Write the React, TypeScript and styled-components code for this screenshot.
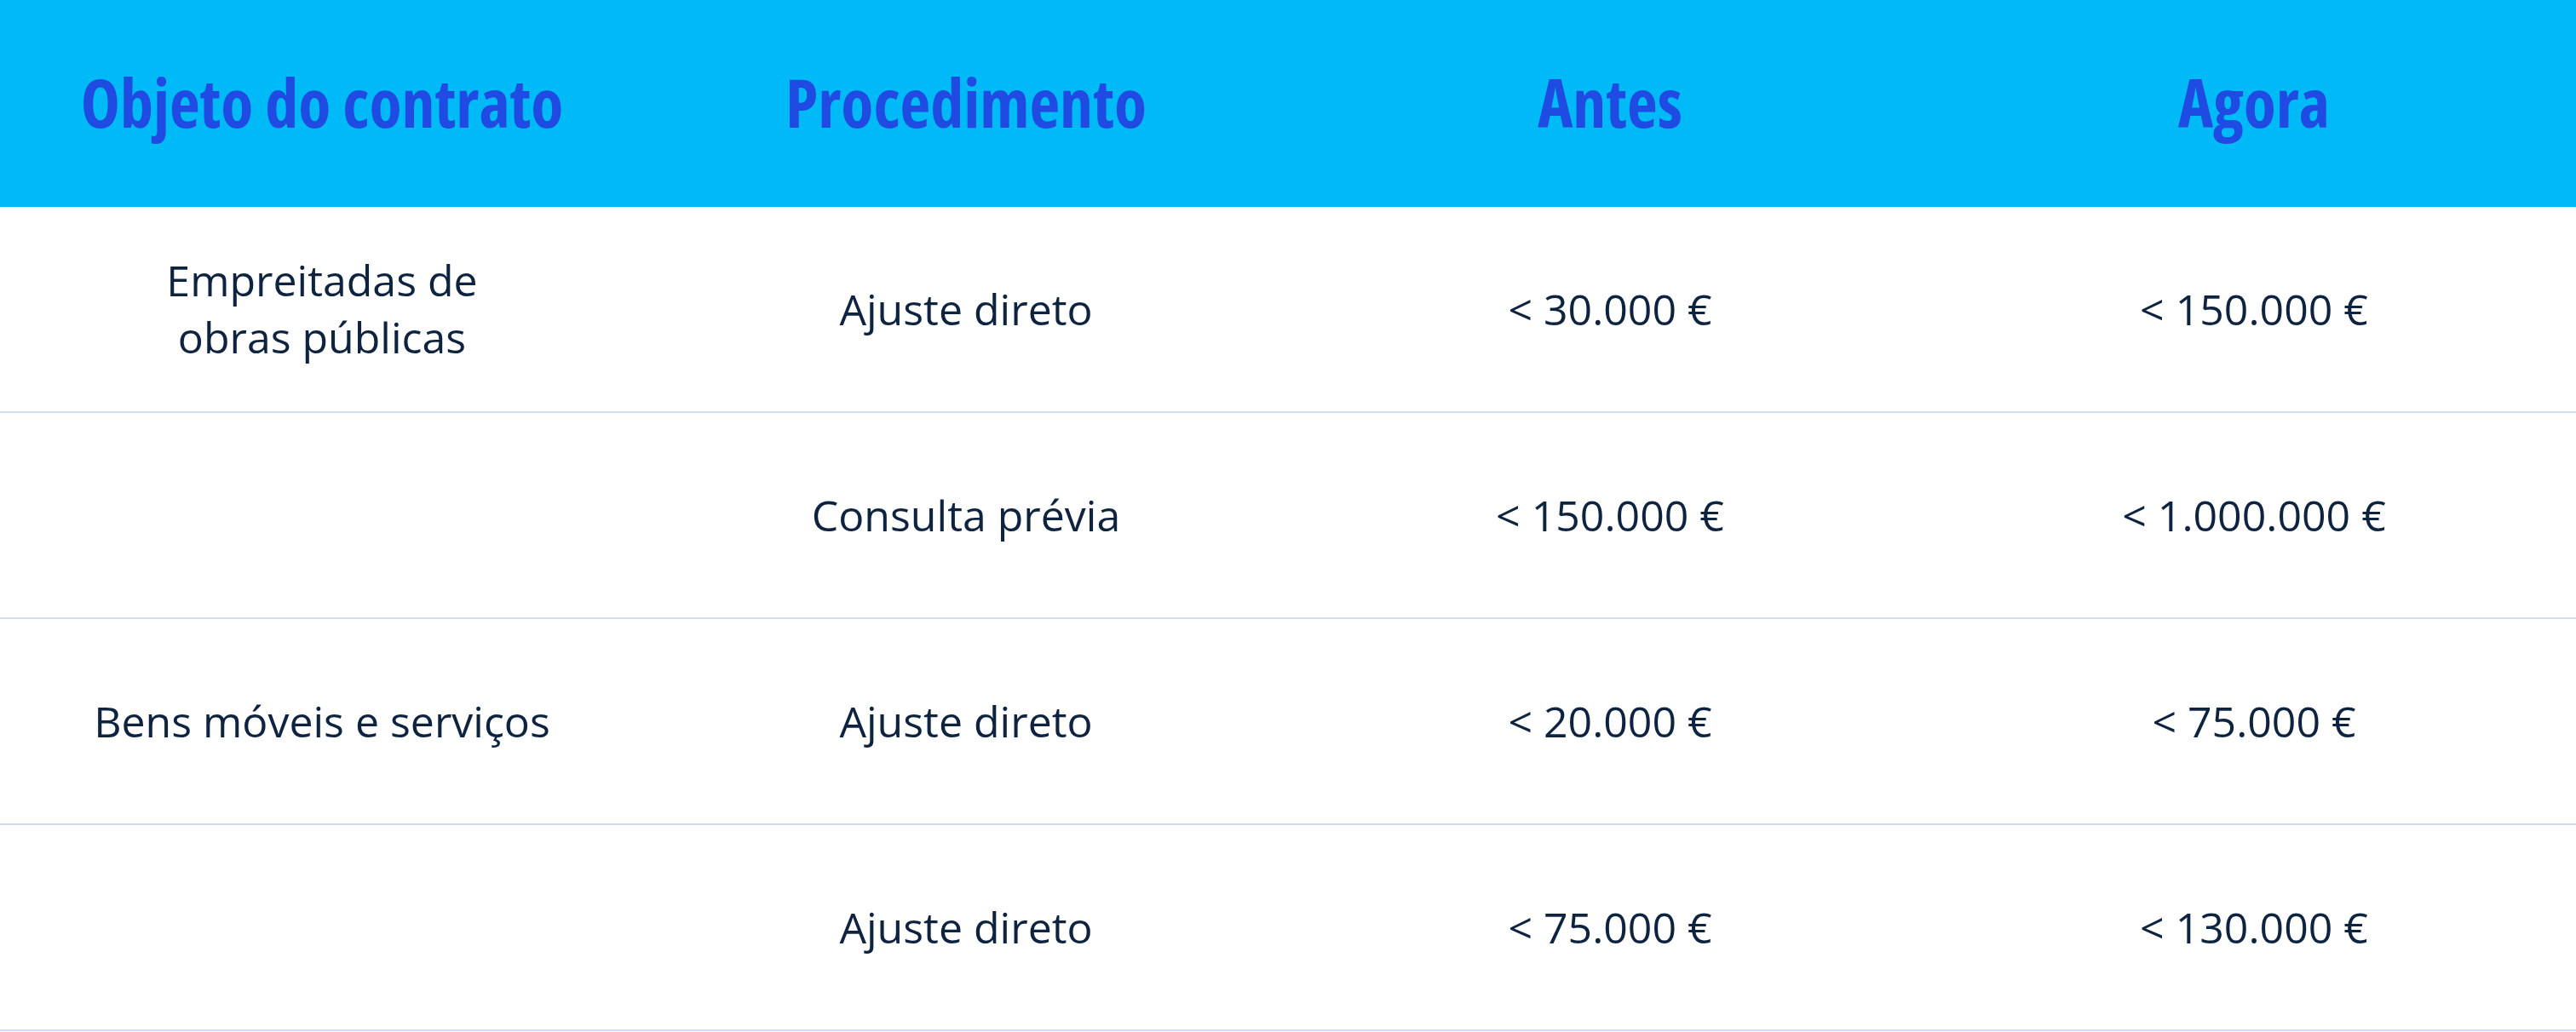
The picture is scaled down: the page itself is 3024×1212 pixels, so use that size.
import * as React from 'react';
import styled, { createGlobalStyle } from 'styled-components';

const GlobalStyles = createGlobalStyle`
  html, body {
    margin: 0;
    padding: 0;
    background: #ffffff;
    font-family: 'Open Sans', 'Liberation Sans', sans-serif;
  }

  *, *:before, *:after {
    box-sizing: border-box;
  }
`;

const Table = styled.div`
  width: 100%;
  display: flex;
  flex-direction: column;
`;

const HeaderRow = styled.div`
  display: grid;
  grid-template-columns: repeat(4, 1fr);
  height: 243px;
  background-color: #00baf7;
`;

const HeaderCell = styled.div`
  display: flex;
  align-items: center;
  justify-content: center;
  font-size: 78px;
  font-weight: 700;
  font-stretch: 75%;
  color: #1f4be2;
  padding-bottom: 4px;
`;

const Row = styled.div`
  display: grid;
  grid-template-columns: repeat(4, 1fr);
  height: 242px;
  border-bottom: 2px solid #d0ddf7;
`;

const Cell = styled.div`
  display: flex;
  align-items: center;
  justify-content: center;
  text-align: center;
  font-size: 50px;
  line-height: 67px;
  color: #0e2340;
`;

const rows = [
  ['Empreitadas de\nobras públicas', 'Ajuste direto', '< 30.000 €', '< 150.000 €'],
  ['', 'Consulta prévia', '< 150.000 €', '< 1.000.000 €'],
  ['Bens móveis e serviços', 'Ajuste direto', '< 20.000 €', '< 75.000 €'],
  ['', 'Ajuste direto', '< 75.000 €', '< 130.000 €'],
];

const headers = ['Objeto do contrato', 'Procedimento', 'Antes', 'Agora'];

export default function App() {
  return (
    <React.Fragment>
      <GlobalStyles />
      <Table>
        <HeaderRow>
          {headers.map(h => (
            <HeaderCell key={h}>{h}</HeaderCell>
          ))}
        </HeaderRow>
        {rows.map((row, i) => (
          <Row key={i}>
            {row.map((cell, j) => (
              <Cell key={j}>
                {cell.split('\n').map((line, k) => (
                  <React.Fragment key={k}>
                    {k > 0 && <br />}
                    {line}
                  </React.Fragment>
                ))}
              </Cell>
            ))}
          </Row>
        ))}
      </Table>
    </React.Fragment>
  );
}
